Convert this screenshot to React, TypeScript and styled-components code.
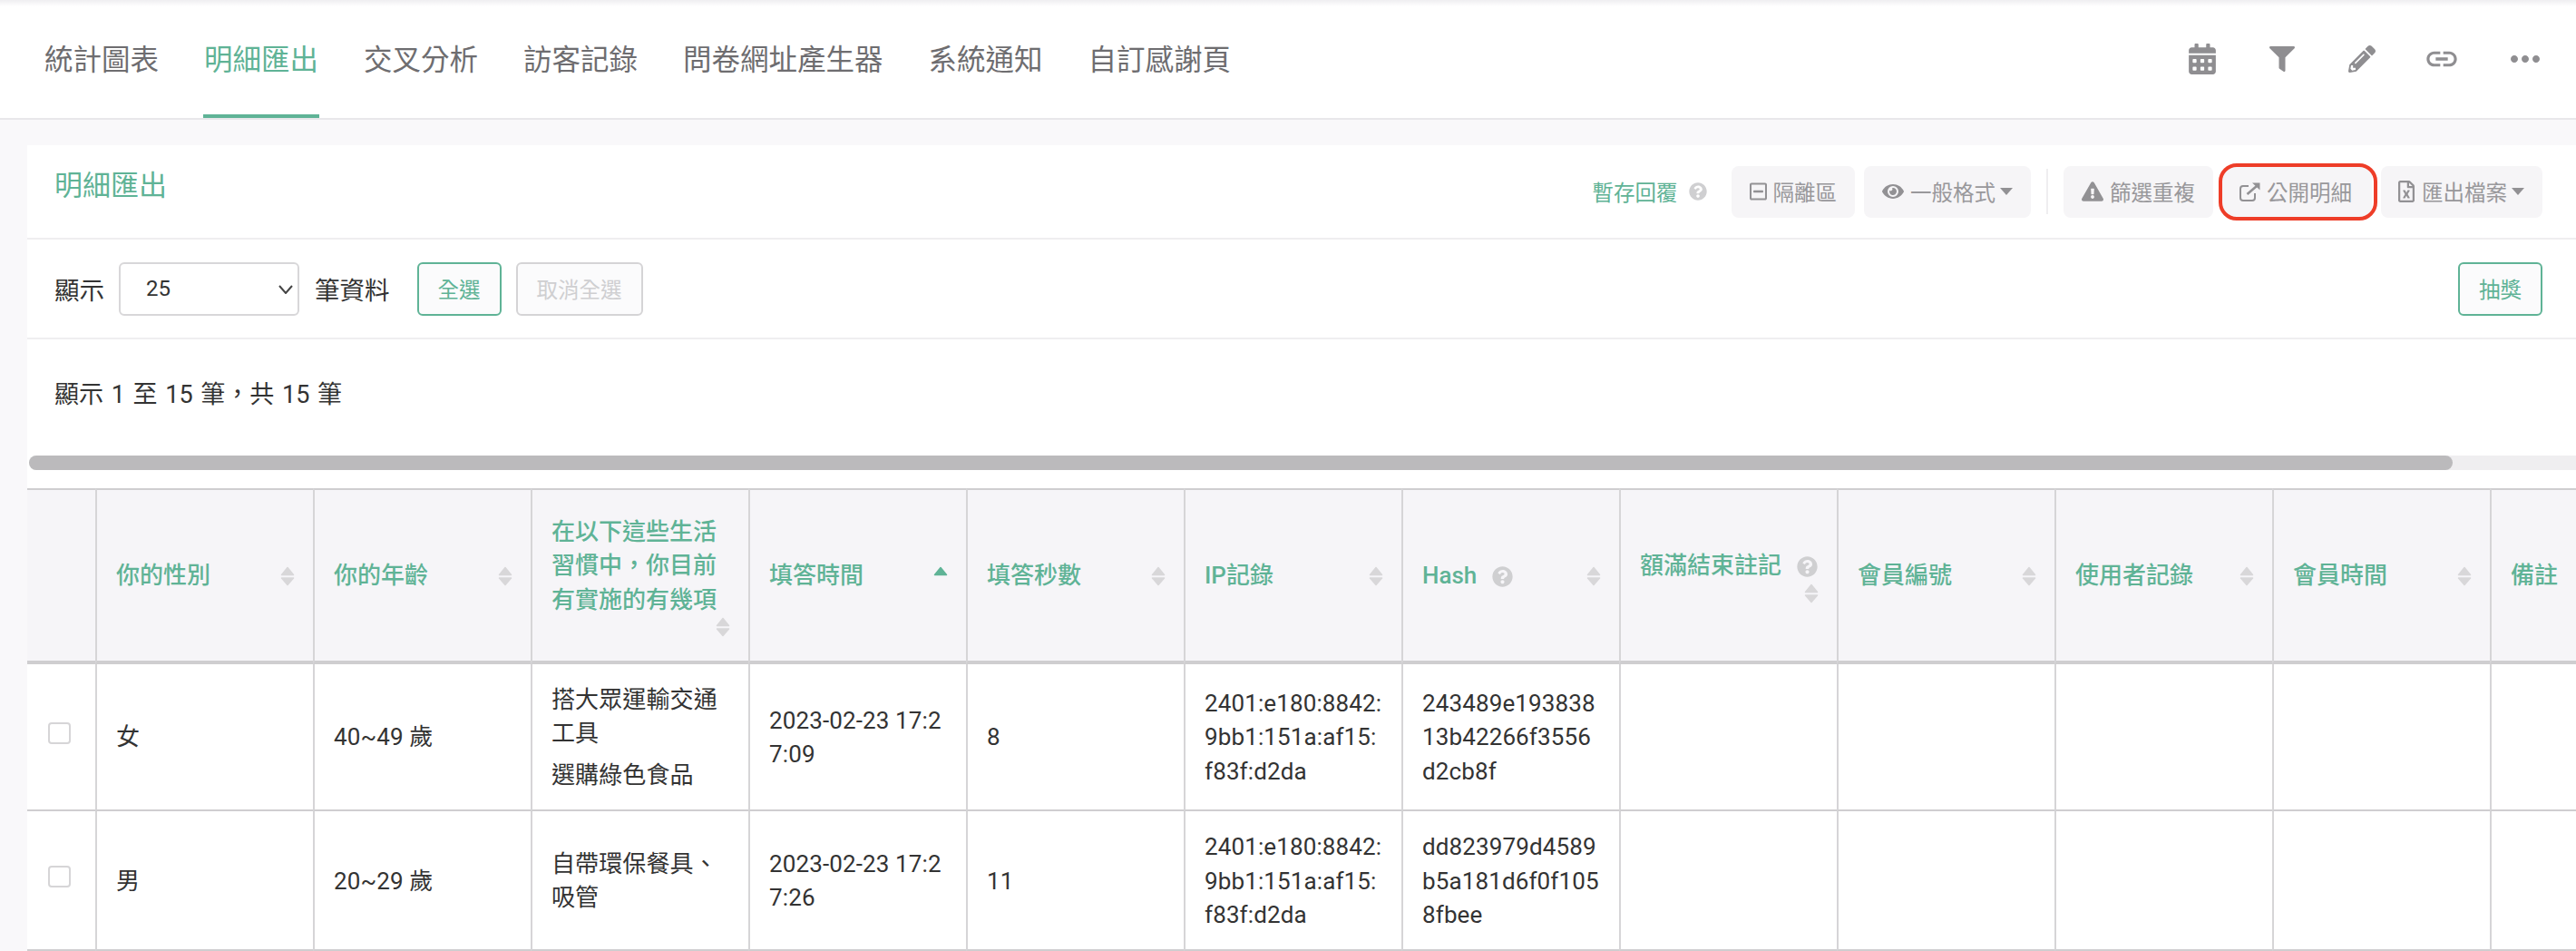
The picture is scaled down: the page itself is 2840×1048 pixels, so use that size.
import React from "react";
import styled, { createGlobalStyle } from "styled-components";
import {
  FaCalendarAlt,
  FaExclamationTriangle,
  FaEye,
  FaFilter,
  FaPencilAlt,
  FaQuestionCircle,
  FaRegFileExcel,
  FaRegMinusSquare,
} from "react-icons/fa";
import { MdLink, MdMoreHoriz } from "react-icons/md";

const GREEN = "#5fb396";
const LINE = "#d6d5d7";

const GlobalStyle = createGlobalStyle`
  html, body {
    margin: 0;
    padding: 0;
    background: #f9f8fa;
    font-family: Roboto, "Noto Sans CJK TC", sans-serif;
    color: #333;
  }
  * { box-sizing: border-box; }
`;

const Page = styled.div`
  width: 2840px;
  height: 1048px;
  overflow: hidden;
`;

const TopNav = styled.nav`
  display: flex;
  align-items: stretch;
  height: 132px;
  padding: 0 12px 0 48px;
  background: linear-gradient(#efeef1 0, #fff 7px);
  border-bottom: 2px solid #e8e7ea;
`;

const Tabs = styled.div`
  display: flex;
  gap: 48px;
`;

const Tab = styled.a<{ $active?: boolean }>`
  display: flex;
  align-items: center;
  padding: 0 1px;
  font-size: 31.5px;
  color: ${(p) => (p.$active ? GREEN : "#6e6d70")};
  border-bottom: 4px solid ${(p) => (p.$active ? GREEN : "transparent")};
`;

const NavIcons = styled.div`
  display: flex;
  margin-left: auto;
  color: #8f8e91;
`;

const NavIcon = styled.span<{ $size: number; $shift?: number }>`
  display: flex;
  align-items: center;
  justify-content: center;
  width: 88px;
  margin-left: ${(p) => p.$shift ?? 0}px;
  font-size: ${(p) => p.$size}px;
`;

const Card = styled.section`
  margin: 28px 0 0 30px;
  background: #fff;
`;

const CardHead = styled.header`
  display: flex;
  align-items: center;
  justify-content: space-between;
  height: 104px;
  padding: 0 37px 0 30px;
  border-bottom: 2px solid #efeef0;
`;

const CardTitle = styled.h2`
  margin: 0 0 20px;
  font-size: 31px;
  font-weight: 400;
  color: ${GREEN};
`;

const Actions = styled.div`
  display: flex;
  align-items: center;
  gap: 10px;
`;

const SaveReply = styled.span`
  display: flex;
  align-items: center;
  gap: 12px;
  margin-right: 17px;
  font-size: 23.5px;
  color: ${GREEN};
  svg {
    font-size: 20px;
    color: #cfcfd1;
  }
`;

const GrayButton = styled.button<{ $marked?: boolean; $icon?: number; $left?: number }>`
  position: relative;
  display: flex;
  align-items: center;
  gap: 7px;
  height: 57px;
  padding: 0 20px 0 ${(p) => p.$left ?? 20}px;
  border: 0;
  border-radius: 8px;
  background: #f6f5f7;
  color: #99989b;
  font: inherit;
  font-size: 23.5px;
  svg {
    flex: none;
    width: ${(p) => p.$icon ?? 24}px;
    height: 24px;
    color: #929194;
  }
  ${(p) =>
    p.$marked &&
    `
    padding: 0 22px 0 18px;
    &::after {
      content: "";
      position: absolute;
      inset: -3px -6px -3px -4px;
      border: 4px solid #ee3d28;
      border-radius: 20px;
    }
  `}
`;

const Caret = styled.i`
  width: 0;
  height: 0;
  margin-left: -2px;
  border-style: solid;
  border-width: 8px 7px 0;
  border-color: #929194 transparent transparent;
`;

const Divider = styled.span`
  width: 2px;
  height: 50px;
  margin: 0 7px;
  background: #efeef0;
`;

const Controls = styled.div`
  display: flex;
  align-items: center;
  height: 110px;
  padding: 0 37px 0 30px;
  border-bottom: 2px solid #efeef0;
  font-size: 27.5px;
`;

const SelectWrap = styled.div`
  position: relative;
  width: 199px;
  margin: 0 17px 0 16px;
`;

const PageSize = styled.select`
  display: block;
  width: 100%;
  height: 59px;
  padding: 0 0 0 28px;
  appearance: none;
  border: 2px solid #d8d7d9;
  border-radius: 6px;
  background: #fff;
  color: #333;
  font: inherit;
  font-size: 24px;
`;

const Chevron = styled.svg`
  position: absolute;
  top: 25px;
  right: 7px;
  width: 16px;
  height: 10px;
  fill: none;
  stroke: #444;
  stroke-width: 2;
  pointer-events: none;
`;

const OutlineButton = styled.button<{ $disabled?: boolean; $left?: number }>`
  height: 59px;
  padding: 0 21px;
  margin-left: ${(p) => p.$left ?? 0}px;
  border: 2px solid ${(p) => (p.$disabled ? "#d5d4d6" : GREEN)};
  border-radius: 6px;
  background: #fbfbfc;
  color: ${(p) => (p.$disabled ? "#cfcfd1" : GREEN)};
  font: inherit;
  font-size: 23.5px;
`;

const Spacer = styled.div`
  flex: 1;
`;

const Info = styled.div`
  height: 128px;
  padding: 43px 30px 0;
  font-size: 27px;
  line-height: 37px;
  word-spacing: 2px;
`;

const Scrollbar = styled.div`
  height: 16px;
  margin-left: 2px;
  border-radius: 8px 0 0 8px;
  background: #efeef0;
`;

const ScrollThumb = styled.div`
  width: 2672px;
  height: 16px;
  border-radius: 8px;
  background: #bbbabc;
`;

const Table = styled.table`
  width: 2955px;
  margin-top: 20px;
  table-layout: fixed;
  border-collapse: separate;
  border-spacing: 0;
  font-size: 26px;
  line-height: 37.4px;
`;

const Th = styled.th<{ $w: number }>`
  width: ${(p) => p.$w}px;
  height: 194px;
  padding: 2px 20px 0 21px;
  background: #f6f5f8;
  border-top: 2px solid #cfced0;
  border-bottom: 4px solid #cfced0;
  border-left: 2px solid ${LINE};
  font-weight: 500;
  text-align: left;
  color: ${GREEN};
  &:first-child {
    border-left: 0;
  }
`;

const HeadInner = styled.div`
  display: flex;
  flex-wrap: wrap;
  align-items: center;
  justify-content: space-between;
`;

const HeadLabel = styled.span`
  display: inline-flex;
  align-items: center;
  gap: 17px;
  svg {
    font-size: 23px;
    color: #cfcfd1;
  }
`;

const Sort = styled.svg`
  display: block;
  width: 16px;
  height: 22px;
  margin-left: auto;
`;

const Td = styled.td`
  padding: 21px 20px 19px 21px;
  border-bottom: 2px solid #cfced0;
  border-left: 2px solid ${LINE};
  vertical-align: middle;
  word-break: break-all;
  letter-spacing: 0.12px;
  &:first-child {
    border-left: 0;
    padding: 0 0 0 23px;
  }
`;

const Check = styled.span`
  display: block;
  width: 25px;
  height: 24px;
  margin-top: -9px;
  border: 2px solid #d6d5d7;
  border-radius: 4px;
`;

const Answer = styled.div`
  & + & {
    margin-top: 8px;
  }
`;

function SortIcon({ active }: { active?: boolean }) {
  const color = active ? GREEN : "#d8d7d9";
  return (
    <Sort viewBox="0 0 16 22" fill={color} stroke={color} strokeWidth="1.5" strokeLinejoin="round">
      <path d="M8 1.5 L14.5 9.5 H1.5 Z" />
      {!active && <path d="M1.5 13 H14.5 L8 20.5 Z" />}
    </Sort>
  );
}

function ExternalIcon() {
  return (
    <svg viewBox="0 0 24 24" fill="none" stroke="currentColor" strokeWidth="2">
      <path d="M11 6 H5 a3 3 0 0 0 -3 3 V19 a3 3 0 0 0 3 3 H15 a3 3 0 0 0 3 -3 V14" />
      <path d="M9.5 15 L20 6" strokeWidth="2.6" />
      <path d="M15 2.5 H23.5 V10.5 Z" fill="currentColor" stroke="none" />
    </svg>
  );
}

type Col = { label: string; help?: boolean; active?: boolean };

const columns: Col[] = [
  { label: "你的性別" },
  { label: "你的年齡" },
  { label: "在以下這些生活習慣中，你目前有實施的有幾項" },
  { label: "填答時間", active: true },
  { label: "填答秒數" },
  { label: "IP記錄" },
  { label: "Hash", help: true },
  { label: "額滿結束註記", help: true },
  { label: "會員編號" },
  { label: "使用者記錄" },
  { label: "會員時間" },
  { label: "備註" },
];

const rows = [
  {
    gender: "女",
    age: "40~49 歲",
    habits: ["搭大眾運輸交通工具", "選購綠色食品"],
    time: "2023-02-23 17:27:09",
    secs: "8",
    ip: "2401:e180:8842:9bb1:151a:af15:f83f:d2da",
    hash: "243489e19383813b42266f3556d2cb8f",
  },
  {
    gender: "男",
    age: "20~29 歲",
    habits: ["自帶環保餐具、吸管"],
    time: "2023-02-23 17:27:26",
    secs: "11",
    ip: "2401:e180:8842:9bb1:151a:af15:f83f:d2da",
    hash: "dd823979d4589b5a181d6f0f1058fbee",
  },
];

export default function App() {
  return (
    <Page>
      <GlobalStyle />
      <TopNav>
        <Tabs>
          <Tab>統計圖表</Tab>
          <Tab $active>明細匯出</Tab>
          <Tab>交叉分析</Tab>
          <Tab>訪客記錄</Tab>
          <Tab>問卷網址產生器</Tab>
          <Tab>系統通知</Tab>
          <Tab>自訂感謝頁</Tab>
        </Tabs>
        <NavIcons>
          <NavIcon $size={34}><FaCalendarAlt /></NavIcon>
          <NavIcon $size={28}><FaFilter /></NavIcon>
          <NavIcon $size={30}><FaPencilAlt /></NavIcon>
          <NavIcon $size={40}><MdLink /></NavIcon>
          <NavIcon $size={48} $shift={4}><MdMoreHoriz /></NavIcon>
        </NavIcons>
      </TopNav>
      <Card>
        <CardHead>
          <CardTitle>明細匯出</CardTitle>
          <Actions>
            <SaveReply>暫存回覆 <FaQuestionCircle /></SaveReply>
            <GrayButton $icon={19}><FaRegMinusSquare />隔離區</GrayButton>
            <GrayButton><FaEye />一般格式<Caret /></GrayButton>
            <Divider />
            <GrayButton><FaExclamationTriangle />篩選重複</GrayButton>
            <GrayButton $marked><ExternalIcon />公開明細</GrayButton>
            <GrayButton $icon={20} $left={18}><FaRegFileExcel />匯出檔案<Caret /></GrayButton>
          </Actions>
        </CardHead>
        <Controls>
          顯示
          <SelectWrap>
            <PageSize defaultValue="25">
              <option>10</option>
              <option>25</option>
              <option>50</option>
            </PageSize>
            <Chevron viewBox="0 0 16 10"><path d="M1 1 L8 9 L15 1" /></Chevron>
          </SelectWrap>
          筆資料
          <OutlineButton $left={30}>全選</OutlineButton>
          <OutlineButton $disabled $left={16}>取消全選</OutlineButton>
          <Spacer />
          <OutlineButton>抽獎</OutlineButton>
        </Controls>
        <Info>顯示 1 至 15 筆，共 15 筆</Info>
        <Scrollbar><ScrollThumb /></Scrollbar>
        <Table>
          <thead>
            <tr>
              <Th $w={75} />
              {columns.map((c) => (
                <Th key={c.label} $w={240}>
                  <HeadInner>
                    <HeadLabel>
                      {c.label}
                      {c.help && <FaQuestionCircle />}
                    </HeadLabel>
                    <SortIcon active={c.active} />
                  </HeadInner>
                </Th>
              ))}
            </tr>
          </thead>
          <tbody>
            {rows.map((r) => (
              <tr key={r.time}>
                <Td><Check /></Td>
                <Td>{r.gender}</Td>
                <Td>{r.age}</Td>
                <Td>
                  {r.habits.map((h) => (
                    <Answer key={h}>{h}</Answer>
                  ))}
                </Td>
                <Td>{r.time}</Td>
                <Td>{r.secs}</Td>
                <Td>{r.ip}</Td>
                <Td>{r.hash}</Td>
                <Td />
                <Td />
                <Td />
                <Td />
                <Td />
              </tr>
            ))}
          </tbody>
        </Table>
      </Card>
    </Page>
  );
}
